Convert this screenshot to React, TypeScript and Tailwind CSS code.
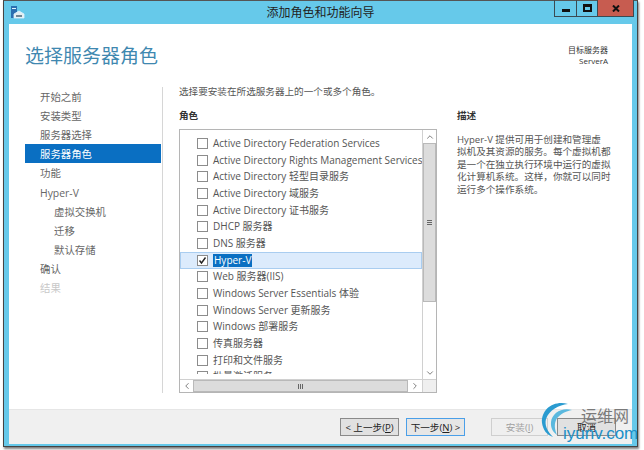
import React from 'react';
import { ChevronLeft, ChevronRight, ChevronUp, ChevronDown } from 'lucide-react';

const cjk = "font-['Open_Sans','Noto_Sans_CJK_SC',sans-serif]";

const steps = [
  { name: '开始之前', indent: false },
  { name: '安装类型', indent: false },
  { name: '服务器选择', indent: false },
  { name: '服务器角色', indent: false, active: true },
  { name: '功能', indent: false },
  { name: 'Hyper-V', indent: false },
  { name: '虚拟交换机', indent: true },
  { name: '迁移', indent: true },
  { name: '默认存储', indent: true },
  { name: '确认', indent: false },
  { name: '结果', indent: false, disabled: true },
];

const roles = [
  'Active Directory Federation Services',
  'Active Directory Rights Management Services',
  'Active Directory 轻型目录服务',
  'Active Directory 域服务',
  'Active Directory 证书服务',
  'DHCP 服务器',
  'DNS 服务器',
  'Hyper-V',
  'Web 服务器(IIS)',
  'Windows Server Essentials 体验',
  'Windows Server 更新服务',
  'Windows 部署服务',
  '传真服务器',
  '打印和文件服务',
  '批量激活服务',
];

const RoleRow = ({ label }: { label: string }) => {
  const selected = label === 'Hyper-V';
  return (
    <div
      className={`flex items-center h-[16.7px] shrink-0 ${
        selected ? 'pl-[16px] bg-[#dcebfc] border border-[#a9cdf0]' : 'pl-[17px]'
      }`}
    >
      <span className="w-[11px] h-[11px] border border-[#8c8c8c] bg-white shrink-0 flex items-center justify-center">
        {selected && (
          <svg width="9" height="9" viewBox="0 0 9 9">
            <path d="M1.5 4.5 L3.5 7 L7.5 1.5" fill="none" stroke="#222" strokeWidth="1.4" />
          </svg>
        )}
      </span>
      <span
        className={`ml-[5px] whitespace-nowrap ${
          selected ? 'bg-[#0a6fc2] text-white px-px' : ''
        }`}
      >
        {label}
      </span>
    </div>
  );
};

export default function App() {
  return (
    <div className={`relative w-[644px] h-[450px] bg-white overflow-hidden ${cjk} text-[9.6px] leading-[13px] text-[#555]`}>
      <div className="w-[635px] h-[447px] ml-[3px] bg-[#66c9ea] border border-[#444] border-t-[#555] flex flex-col shadow-[1px_2px_2px_rgba(0,0,0,0.5)]">
        {/* Title bar */}
        <div className="h-[23px] shrink-0 flex items-center relative">
          <svg className="ml-[7px]" width="14" height="13" viewBox="0 0 14 13">
            <rect x="0" y="0" width="6" height="12" fill="#2b6fb0" />
            <rect x="1" y="2" width="4" height="1" fill="#dff4ff" />
            <path d="M3 12 V8 L8 5 L13 8 V12 Z" fill="#e4eef2" stroke="#dff4ff" strokeWidth="0.8" />
            <rect x="5" y="9" width="6" height="2" fill="#6f8796" />
          </svg>
          <div className="absolute inset-x-0 text-center text-[12px] text-[#222]">添加角色和功能向导</div>
          <div className="absolute right-[3px] -top-px flex h-[17px] border border-t-0 border-[#3b4a52]">
            <div className="w-[22px] flex items-center justify-center border-r border-[#3b4a52]">
              <div className="w-[8px] h-[3px] mt-[4px] bg-[#111]" />
            </div>
            <div className="w-[21px] flex items-center justify-center border-r border-[#3b4a52]">
              <div className="w-[9px] h-[8px] border-2 border-t-[3px] border-[#111]" />
            </div>
            <div className="w-[35px] bg-[#c75c50] flex items-center justify-center">
              <svg width="8" height="7" viewBox="0 0 8 7">
                <path d="M1 0.5 L7 6.5 M7 0.5 L1 6.5" stroke="#111" strokeWidth="2" />
              </svg>
            </div>
          </div>
        </div>

        {/* Client area */}
        <div className="flex-1 mx-[5px] mb-[2px] bg-white flex flex-col min-h-0 relative">
          <div className="flex justify-between items-start h-[63px] shrink-0 pl-[16px] pr-[24px]">
            <h1 className="text-[19px] leading-[28px] mt-[18px] text-[#3f88b0]">选择服务器角色</h1>
            <div className="text-right text-[8px] leading-[11px] text-[#333] mt-[20px]">
              <div>目标服务器</div>
              <div>ServerA</div>
            </div>
          </div>

          <div className="flex flex-1 min-h-0">
            {/* Step list */}
            <div className="w-[136px] shrink-0 ml-[16px] pb-[14px]">
              {steps.map((s) => (
                <div
                  key={s.name}
                  className={`h-[19.1px] flex items-center pt-[2px] text-[10.4px] whitespace-nowrap ${s.indent ? 'pl-[29px]' : 'pl-[15px]'} ${
                    s.active ? 'bg-[#0a6fc2] text-white' : s.disabled ? 'text-[#c8c8c8]' : 'text-[#666]'
                  }`}
                >
                  {s.name}
                </div>
              ))}
            </div>

            {/* Right side */}
            <div className="border-l border-[#d6d6d6] pl-[16px] ml-[1px] mb-[16px] flex-1 min-w-0 flex flex-col">
              <div className="leading-[13px] -mt-[2px]">选择要安装在所选服务器上的一个或多个角色。</div>
              <div className="flex flex-1 min-h-0 mt-[11px]">
                <div className="w-[258px] shrink-0 flex flex-col">
                  <div className="font-bold leading-[13px] text-[#333] mb-[7px]">角色</div>
                  <div className="flex-1 min-h-0 border border-[#b5b5b5] bg-white grid grid-cols-[1fr_14px] grid-rows-[1fr_13px]">
                    <div className="min-h-0 min-w-0 flex flex-col">
                      <div className="flex-1 min-h-0 mb-[5px] overflow-hidden pt-[5px] flex flex-col text-[10px]">
                        {roles.map((r) => (
                          <RoleRow key={r} label={r} />
                        ))}
                      </div>
                    </div>
                    {/* Vertical scrollbar */}
                    <div className="flex flex-col border-l border-[#d0d0d0]">
                      <div className="h-[13px] flex items-center justify-center text-[#666]">
                        <ChevronUp size={10} strokeWidth={2} />
                      </div>
                      <div className="h-[159px] bg-[#dcdcdc] border border-[#b9b9b9] flex flex-col items-center justify-center gap-px">
                        <div className="w-[5px] h-px bg-[#666]" />
                        <div className="w-[5px] h-px bg-[#666]" />
                        <div className="w-[5px] h-px bg-[#666]" />
                      </div>
                      <div className="flex-1" />
                      <div className="h-[13px] flex items-center justify-center text-[#666]">
                        <ChevronDown size={10} strokeWidth={2} />
                      </div>
                    </div>
                    {/* Horizontal scrollbar */}
                    <div className="flex border-t border-[#d0d0d0]">
                      <div className="w-[13px] flex items-center justify-center text-[#666]">
                        <ChevronLeft size={10} strokeWidth={2} />
                      </div>
                      <div className="flex-1 bg-[#dcdcdc] border border-[#b9b9b9] flex items-center justify-center gap-px">
                        <div className="w-px h-[5px] bg-[#666]" />
                        <div className="w-px h-[5px] bg-[#666]" />
                        <div className="w-px h-[5px] bg-[#666]" />
                      </div>
                      <div className="w-[14px] flex items-center justify-center text-[#666]">
                        <ChevronRight size={10} strokeWidth={2} />
                      </div>
                    </div>
                    <div className="bg-[#efefef] border-t border-l border-[#d0d0d0]" />
                  </div>
                </div>
                <div className="ml-[20px] w-[156px] shrink-0">
                  <div className="font-bold leading-[13px] text-[#333] mb-[7px]">描述</div>
                  <div className="leading-[12.4px] pt-[5px]">
                    Hyper-V 提供可用于创建和管理虚
                    <br />
                    拟机及其资源的服务。每个虚拟机都
                    <br />
                    是一个在独立执行环境中运行的虚拟
                    <br />
                    化计算机系统。这样，你就可以同时
                    <br />
                    运行多个操作系统。
                  </div>
                </div>
              </div>
            </div>
          </div>

          {/* Footer */}
          <div className="h-[35px] shrink-0 bg-[#f0f0f0] border-t border-[#e6e6e6] flex items-center text-[#222]">
            <div className="ml-[331px] flex items-center">
              <button className="w-[59px] h-[18px] border border-[#8a8a8a] bg-[#e1e1e1] flex items-center justify-center">
                &lt; 上一步(<u>P</u>)
              </button>
              <button className="ml-[7px] w-[59px] h-[18px] border border-[#4a9fe8] bg-[#e6e6e6] flex items-center justify-center">
                下一步(<u>N</u>) &gt;
              </button>
              <button className="ml-[26px] w-[57px] h-[18px] border border-[#cfcfcf] bg-[#efefef] text-[#a0a0a0] flex items-center justify-center">
                安装(<u>I</u>)
              </button>
              <button className="ml-[9px] w-[59px] h-[18px] border border-[#8a8a8a] bg-[#e1e1e1] flex items-center justify-center">
                取消
              </button>
            </div>
          </div>
        </div>
      </div>

      {/* Watermark over the corner */}
      <svg className="absolute left-[538px] top-[400px]" width="40" height="42" viewBox="0 0 40 42">
        <path d="M30 4 C16 0 3 9 4 23 C5 30 9 35 15 37 C9 31 6.5 25 8 19 C11 10 21 5 30 4 Z" fill="#2a9bd0" />
        <path d="M34 10 C24 7 14 13 13 22 C12.5 28 15 32 19 35 C16.5 29 16 24 18.5 19 C22 14 28 11 34 10 Z" fill="#5ab8de" />
      </svg>
      <div className="absolute left-[581px] top-[405px] text-[16px] leading-[20px] text-[#7a7a7a] font-['Noto_Sans_CJK_SC',sans-serif]">运维网</div>
      <div className="absolute left-[563px] top-[424px] text-[17px] leading-[20px] text-[#1a8fc8] font-['Liberation_Sans',sans-serif]">iyunv.com</div>
    </div>
  );
}
